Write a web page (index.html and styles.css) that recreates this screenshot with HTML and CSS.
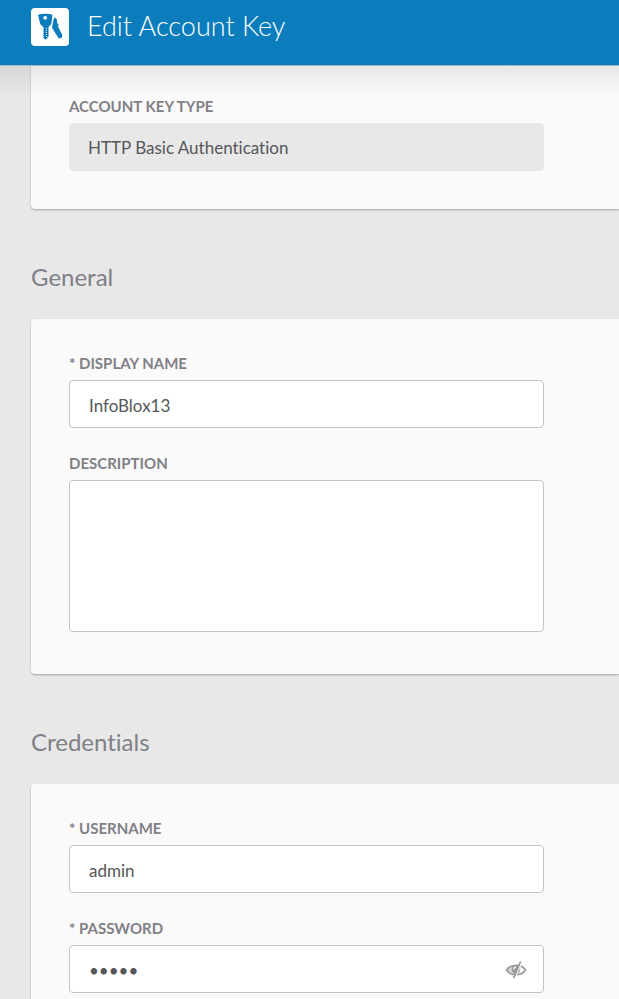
FILE: index.html
```html
<!DOCTYPE html>
<html lang="en">
<head>
    <meta charset="UTF-8">
    <meta name="viewport" content="width=device-width, initial-scale=1.0">
    <title>Edit Account Key</title>
    <link rel="stylesheet" href="styles.css">
</head>
<body>
    <header class="header">
        <svg class="header-icon" viewBox="0 0 38 38" aria-hidden="true">
            <rect width="38" height="38" rx="4" fill="#fff"/>
            <!-- back key -->
            <path d="M22.500 11.500l1.300-2.300 2.200 2.600.1 3.200 1.400 1.400-.4 2.300 4.300 8.500-.8 2.800-2.900.5L21 19.800z" fill="#0b7dbd"/>
            <!-- front key -->
            <path d="M7 6.700c4.500-1.300 10-1.300 14.500 0L20.300 16l-2.800 3v9.500l-1.400 1.500-1.200 1.800-2.400-1.800V19.200l-3.200-3z" fill="#0b7dbd"/>
            <path d="M15.400 20v10" stroke="#fff" stroke-width="1" stroke-dasharray="1 1"/>
            <circle cx="14.200" cy="9.800" r="1.900" fill="#fff"/>
        </svg>
        <h1 class="header-title">Edit Account Key</h1>
    </header>

    <main class="content">
        <section class="card card-first">
            <div class="field">
                <label for="keyType">Account Key Type</label>
                <input type="text" id="keyType" class="readonly" value="HTTP Basic Authentication" readonly>
            </div>
        </section>

        <h2 class="section-title">General</h2>
        <section class="card">
            <div class="field">
                <label for="displayName">* Display Name</label>
                <input type="text" id="displayName" value="InfoBlox13">
            </div>
            <div class="field">
                <label for="description">Description</label>
                <textarea id="description"></textarea>
            </div>
        </section>

        <h2 class="section-title">Credentials</h2>
        <section class="card">
            <div class="field">
                <label for="username">* Username</label>
                <input type="text" id="username" value="admin">
            </div>
            <div class="field">
                <label for="password">* Password</label>
                <div class="password-box">
                    <input type="password" id="password" value="admin">
                    <button type="button" class="toggle-password" aria-label="Show password">
                        <svg class="eye-icon" viewBox="0 0 22 18" fill="none" aria-hidden="true">
                            <path d="M1.500 9C5.500 2.800 16.500 2.800 20.500 9C16.500 15.200 5.500 15.200 1.500 9z" stroke="#999" stroke-width="1.600"/>
                            <path d="M1.500 9C4 4.500 9 3.300 13.500 4.300L12 7L8 6.500L6.500 9L9.500 14C6 13.500 3 11.500 1.500 9z" fill="#999" fill-opacity=".45"/>
                            <circle cx="11" cy="8.500" r="4.300" fill="#999"/>
                            <path d="M8.800 8.500a2.300 2.300 0 0 1 2.200-2.300" stroke="#fff" stroke-width="1.200"/>
                            <path d="M16.800.8L9.800 17.500" stroke="#fff" stroke-width="1.400"/>
                            <path d="M15.600.5L8.600 17.200" stroke="#999" stroke-width="1.700"/>
                        </svg>
                    </button>
                </div>
            </div>
        </section>
    </main>

    <script>
        // Show or hide the password
        document.querySelector('.toggle-password').addEventListener('click', function () {
            const input = document.getElementById('password');
            const hidden = input.type === 'password';
            input.type = hidden ? 'text' : 'password';
            this.setAttribute('aria-label', hidden ? 'Hide password' : 'Show password');
        });
    </script>
</body>
</html>
```
FILE: styles.css
```css
* {
    box-sizing: border-box;
}
body {
    background-color: #e8e8e8;
    font-family: Lato, sans-serif;
    font-variant-ligatures: none;
    margin: 0;
    color: #55565a;
}
.header {
    position: sticky;
    top: 0;
    z-index: 10;
    height: 65px;
    padding: 8px 31px 19px;
    display: flex;
    align-items: center;
    gap: 18px;
    background-color: #0b7dbd;
    box-shadow: 0 1px 0 #a9cbe0;
}
/* soft shade over the content that scrolls under the header */
.header::after {
    content: "";
    position: absolute;
    top: 100%;
    left: 0;
    right: 0;
    height: 32px;
    background: linear-gradient(rgba(0, 0, 0, 0.08), rgba(0, 0, 0, 0));
    pointer-events: none;
}
.header-icon {
    width: 38px;
    height: 38px;
}
.header-title {
    margin: 0;
    padding-bottom: 3px;
    color: white;
    font-size: 27px;
    line-height: 36px;
    font-weight: 300;
}
.content {
    padding-left: 31px;
}
.card {
    padding: 35px 38px 38px;
    background-color: #fafafa;
    border-radius: 4px 0 0 4px;
    box-shadow: 0 1px 2px rgba(0, 0, 0, 0.3);
}
.card-first {
    padding-top: 32px;
    border-top-left-radius: 0;
}
.section-title {
    margin: 53px 0 27px;
    color: #808085;
    font-size: 24px;
    line-height: 30px;
    font-weight: 400;
}
.field {
    max-width: 475px;
}
.field + .field {
    margin-top: 26px;
}
label {
    display: block;
    margin-bottom: 8px;
    color: #808085;
    font-size: 15px;
    line-height: 18px;
    font-weight: 700;
    text-transform: uppercase;
}
input, textarea {
    display: block;
    width: 100%;
    height: 48px;
    margin: 0;
    padding: 2px 19px 0;
    background-color: white;
    border: 1px solid #c4c4c6;
    border-radius: 4px;
    color: #55565a;
    font-family: inherit;
    font-size: 17px;
    font-variant-ligatures: none;
}
textarea {
    height: 152px;
    margin-bottom: 4px;
    padding: 12px 19px;
    resize: none;
}
input.readonly {
    padding: 0 18px;
    background-color: #e8e8e8;
    border-color: #e8e8e8;
}
.password-box {
    position: relative;
}
.password-box input {
    padding-right: 56px;
}
.toggle-password {
    position: absolute;
    top: 0;
    right: 0;
    width: 56px;
    height: 50px;
    padding: 0;
    display: flex;
    align-items: center;
    justify-content: center;
    background: none;
    border: none;
    cursor: pointer;
}
.eye-icon {
    width: 22px;
    height: 18px;
}
```
